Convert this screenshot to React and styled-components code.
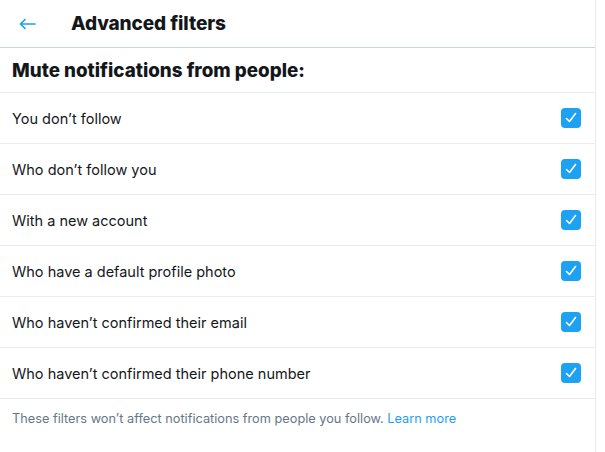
import React from 'react'
import styled, { createGlobalStyle } from 'styled-components'

const GlobalStyle = createGlobalStyle`
  html, body { margin: 0; padding: 0; background: #fff; }
  body { font-family: Inter, "Liberation Sans", sans-serif; color: #14171a; }
`

const Page = styled.div`
  width: 596px;
  min-height: 452px;
  border-right: 1px solid #e6ecf0;
  box-sizing: border-box;
`

const Header = styled.div`
  height: 47px;
  display: flex;
  align-items: center;
  border-bottom: 1px solid #ccd6dd;
`

const BackButton = styled.div`
  width: 71px;
  padding-left: 19px;
  box-sizing: border-box;
  display: flex;
  align-items: center;
  color: #1da1f2;
`

const Title = styled.h2`
  margin: 0;
  font-size: 19px;
  font-weight: 800;
  letter-spacing: -0.1px;
`

const SectionTitle = styled.h3`
  margin: 0;
  height: 44px;
  padding: 0 12px;
  display: flex;
  align-items: center;
  font-size: 18.8px;
  font-weight: 800;
  border-bottom: 1px solid #e6ecf0;
`

const Row = styled.label`
  height: 50px;
  padding: 0 14px 0 12px;
  display: flex;
  align-items: center;
  justify-content: space-between;
  font-size: 14.5px;
  border-bottom: 1px solid #e6ecf0;
`

const Box = styled.span`
  width: 20px;
  height: 20px;
  border-radius: 4px;
  background: ${p => (p.checked ? '#1da1f2' : '#fff')};
  display: flex;
  align-items: center;
  justify-content: center;
`

const Note = styled.p`
  margin: 0;
  padding: 12px 12px;
  font-size: 12.75px;
  color: #657786;
`

const Link = styled.a`
  color: #1da1f2;
  text-decoration: none;
`

const filters = [
  'You don’t follow',
  'Who don’t follow you',
  'With a new account',
  'Who have a default profile photo',
  'Who haven’t confirmed their email',
  'Who haven’t confirmed their phone number',
]

const Check = () => (
  <Box checked>
    <svg width="14" height="14" viewBox="0 0 14 14">
      <path d="M2.5 7.5 L5.5 10.5 L11.5 2.5" fill="none" stroke="#fff" strokeWidth="1.6" strokeLinecap="round" strokeLinejoin="round" />
    </svg>
  </Box>
)

const App = () => {
  return (
    <>
      <GlobalStyle />
      <Page>
        <Header>
          <BackButton>
            <svg width="17" height="12" viewBox="0 0 17 12">
              <path d="M1.5 6 H16 M1.5 6 L6 1.5 M1.5 6 L6 10.5" fill="none" stroke="currentColor" strokeWidth="1.7" strokeLinecap="round" strokeLinejoin="round" />
            </svg>
          </BackButton>
          <Title>Advanced filters</Title>
        </Header>
        <SectionTitle>Mute notifications from people:</SectionTitle>
        {filters.map(f => (
          <Row key={f}>
            <span>{f}</span>
            <Check />
          </Row>
        ))}
        <Note>
          These filters won’t affect notifications from people you follow. <Link href="#">Learn more</Link>
        </Note>
      </Page>
    </>
  )
}

export default App
